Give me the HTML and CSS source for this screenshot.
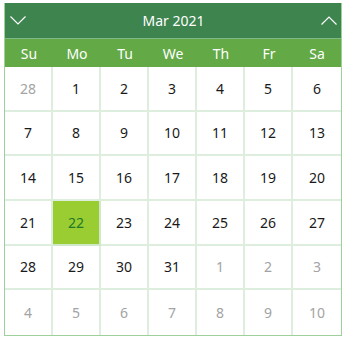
FILE: index.html
```html
<!DOCTYPE html>
<html lang="en">
<head>
    <meta charset="UTF-8">
    <title>Calendar</title>
    <link rel="stylesheet" href="styles.css">
</head>
<body>
<div class="calendar">
    <div class="cal-header">
        <span class="nav">
            <svg width="16" height="9" viewBox="0 0 16 9"><polyline points="0.5,0.5 8,8 15.5,0.5" fill="none" stroke="#fff" stroke-width="1.2"/></svg>
        </span>
        <span class="title">Mar 2021</span>
        <span class="nav">
            <svg width="16" height="9" viewBox="0 0 16 9"><polyline points="0.5,8.5 8,1 15.5,8.5" fill="none" stroke="#fff" stroke-width="1.2"/></svg>
        </span>
    </div>
    <div class="weekdays">
        <span>Su</span><span>Mo</span><span>Tu</span><span>We</span><span>Th</span><span>Fr</span><span>Sa</span>
    </div>
    <div class="days">
        <span class="other">28</span><span>1</span><span>2</span><span>3</span><span>4</span><span>5</span><span>6</span>
        <span>7</span><span>8</span><span>9</span><span>10</span><span>11</span><span>12</span><span>13</span>
        <span>14</span><span>15</span><span>16</span><span>17</span><span>18</span><span>19</span><span>20</span>
        <span>21</span><span class="selected">22</span><span>23</span><span>24</span><span>25</span><span>26</span><span>27</span>
        <span>28</span><span>29</span><span>30</span><span>31</span><span class="other">1</span><span class="other">2</span><span class="other">3</span>
        <span class="other">4</span><span class="other">5</span><span class="other">6</span><span class="other">7</span><span class="other">8</span><span class="other">9</span><span class="other">10</span>
    </div>
</div>
</body>
</html>
```

FILE: styles.css
```css
* { padding: 0; margin: 0; box-sizing: border-box; }
body {
    background: #ffffff;
    font-family: "Noto Sans", "Open Sans", sans-serif;
    padding: 3px 4px;
}
.calendar {
    width: 338px;
    border: 1px solid #9fd09b;
    border-top: none;
}
.cal-header {
    height: 36px;
    background-color: #3d844f;
    color: #ffffff;
    display: flex;
    align-items: center;
    justify-content: space-between;
    padding: 0 3px 0 4px;
    border-bottom: 1px solid #7fb888;
}
.cal-header .nav {
    display: flex;
    width: 18px;
    justify-content: center;
}
.cal-header .title {
    font-size: 14px;
}
.weekdays {
    height: 28px;
    background-color: #63a946;
    color: #ffffff;
    display: grid;
    grid-template-columns: repeat(7, 1fr);
    align-items: center;
    font-size: 14px;
    text-align: center;
}
.days {
    display: grid;
    grid-template-columns: repeat(7, 1fr);
    grid-template-rows: repeat(6, 1fr);
    height: 268px;
    font-size: 14px;
    color: #1a1a1a;
}
.days span {
    display: flex;
    align-items: center;
    justify-content: center;
    border-right: 2px solid #deeede;
    border-bottom: 2px solid #deeede;
}
.days span:nth-child(7n) {
    border-right: none;
}
.days span:nth-last-child(-n+7) {
    border-bottom: none;
}
.days .other {
    color: #a3a3a3;
}
.days .selected {
    background-color: #9acd32;
    color: #1e7a26;
    border-color: #cfe8c8;
}
```
